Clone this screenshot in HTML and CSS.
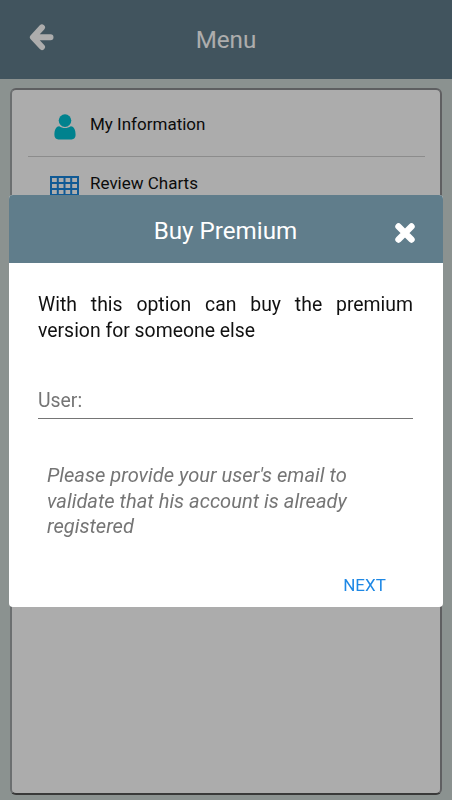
FILE: index.html
```html
<!DOCTYPE html>
<html lang="en">
<head>
    <meta charset="UTF-8">
    <meta name="viewport" content="width=device-width, initial-scale=1.0">
    <title>Menu</title>
    <link rel="stylesheet" href="styles.css">
</head>
<body>
    <!-- Menu screen -->
    <header class="top-bar">
        <svg class="back-icon" width="25" height="27" viewBox="0 0 25 27">
            <path d="M13 3.4L3.9 13.2L13 23M4.5 13.2H21.5" />
        </svg>
        <h1>Menu</h1>
    </header>

    <main class="menu-card">
        <div class="menu-item">
            <svg class="icon-user" width="22" height="26" viewBox="0 0 22 26">
                <circle cx="11" cy="6.6" r="6.3" />
                <path d="M5.2 12.2C1.7 12.6 .4 16 .4 21C.4 23.8 2 25.4 4.4 25.4H17.6C20 25.4 21.6 23.8 21.6 21C21.6 16 20.3 12.6 16.8 12.2C13.4 14.6 8.6 14.6 5.2 12.2Z" />
            </svg>
            <span>My Information</span>
        </div>
        <div class="menu-item">
            <svg class="icon-table" width="29" height="26" viewBox="0 0 29 26">
                <path d="M1 1H28V25H1ZM7.8 1V25M14.5 1V25M21.2 1V25M1 7H28M1 13H28M1 19H28" />
            </svg>
            <span>Review Charts</span>
        </div>
    </main>

    <!-- Buy premium dialog -->
    <div class="overlay">
        <div class="dialog">
            <div class="dialog-header">
                <h2>Buy Premium</h2>
                <svg class="close-icon" width="22" height="22" viewBox="0 0 22 22">
                    <path d="M4.5 4.5L17.5 17.5M17.5 4.5L4.5 17.5" />
                </svg>
            </div>
            <div class="dialog-body">
                <p class="message">With this option can buy the premium version for someone else</p>
                <div class="field">User:</div>
                <p class="hint">Please provide your user's email to validate that his account is already registered</p>
            </div>
            <button class="next-button">NEXT</button>
        </div>
    </div>
</body>
</html>
```

FILE: styles.css
```css
:root {
    --primary-color: #607d8b;
    --background: #cdd8d5;
    --card-bg: #fefefe;
    --text-color: #111;
    --muted-color: #757575;
    --link-color: #1e88e5;
}

* {
    box-sizing: border-box;
}

body {
    font-family: Roboto, Arial, sans-serif;
    background-color: var(--background);
    color: var(--text-color);
    margin: 0;
    height: 800px;
    overflow: hidden;
    display: flex;
    flex-direction: column;
}

h1, h2, p {
    margin: 0;
    font-weight: 400;
}

.top-bar {
    height: 79px;
    flex-shrink: 0;
    display: flex;
    align-items: center;
    background-color: var(--primary-color);
    color: white;
    padding: 0 29px 5px;
}

.top-bar h1 {
    flex: 1;
    font-size: 24.2px;
    text-align: center;
    padding: 5px 25px 0 0;
}

.back-icon {
    fill: none;
    stroke: white;
    stroke-width: 6;
    stroke-linecap: round;
    stroke-linejoin: round;
}

.menu-card {
    flex: 1;
    margin: 9px 10px 5px;
    padding: 8px 15px 8px 16px;
    background-color: var(--card-bg);
    border: 2px solid;
    border-color: #8b8c90 #8d8d90 #555 #a0a4a6;
    border-radius: 6px;
}

.menu-item {
    height: 59px;
    display: grid;
    grid-template-columns: 73px 1fr;
    align-items: center;
    justify-items: center;
    border-bottom: 1px solid #cfcfcf;
    font-size: 17px;
}

.menu-item span {
    justify-self: start;
    margin-left: -11px;
    padding-bottom: 6px;
}

.icon-user {
    fill: #00c0d2;
}

.icon-table {
    fill: none;
    stroke: #1985dc;
    stroke-width: 2;
    margin-top: 5px;
}

.overlay {
    position: fixed;
    inset: 0;
    padding: 195px 9px 0;
    background-color: rgba(0, 0, 0, 0.32);
}

.dialog {
    height: 412px;
    display: flex;
    flex-direction: column;
    background-color: white;
    border-radius: 4px;
    overflow: hidden;
}

.dialog-header {
    height: 68px;
    display: flex;
    align-items: center;
    background-color: var(--primary-color);
    color: white;
    padding: 3px 27px 0 48px;
}

.dialog-header h2 {
    flex: 1;
    font-size: 24.2px;
    text-align: center;
}

.close-icon {
    fill: none;
    stroke: white;
    stroke-width: 6.4;
    stroke-linecap: round;
    margin-top: 4px;
}

.dialog-body {
    flex: 1;
    padding: 29px 30px 0 29px;
    font-size: 19.4px;
    line-height: 25.6px;
}

.message {
    text-align: justify;
}

.field {
    margin-top: 45px;
    height: 31px;
    color: var(--muted-color);
    border-bottom: 1px solid var(--muted-color);
}

.hint {
    margin-top: 44px;
    padding: 0 30px 0 9px;
    color: var(--muted-color);
    font-size: 20.1px;
    font-style: italic;
}

.next-button {
    align-self: flex-end;
    width: 157px;
    height: 43px;
    padding: 0 6px 2px;
    border: none;
    background: none;
    color: var(--link-color);
    font-family: inherit;
    font-size: 17px;
}
```
